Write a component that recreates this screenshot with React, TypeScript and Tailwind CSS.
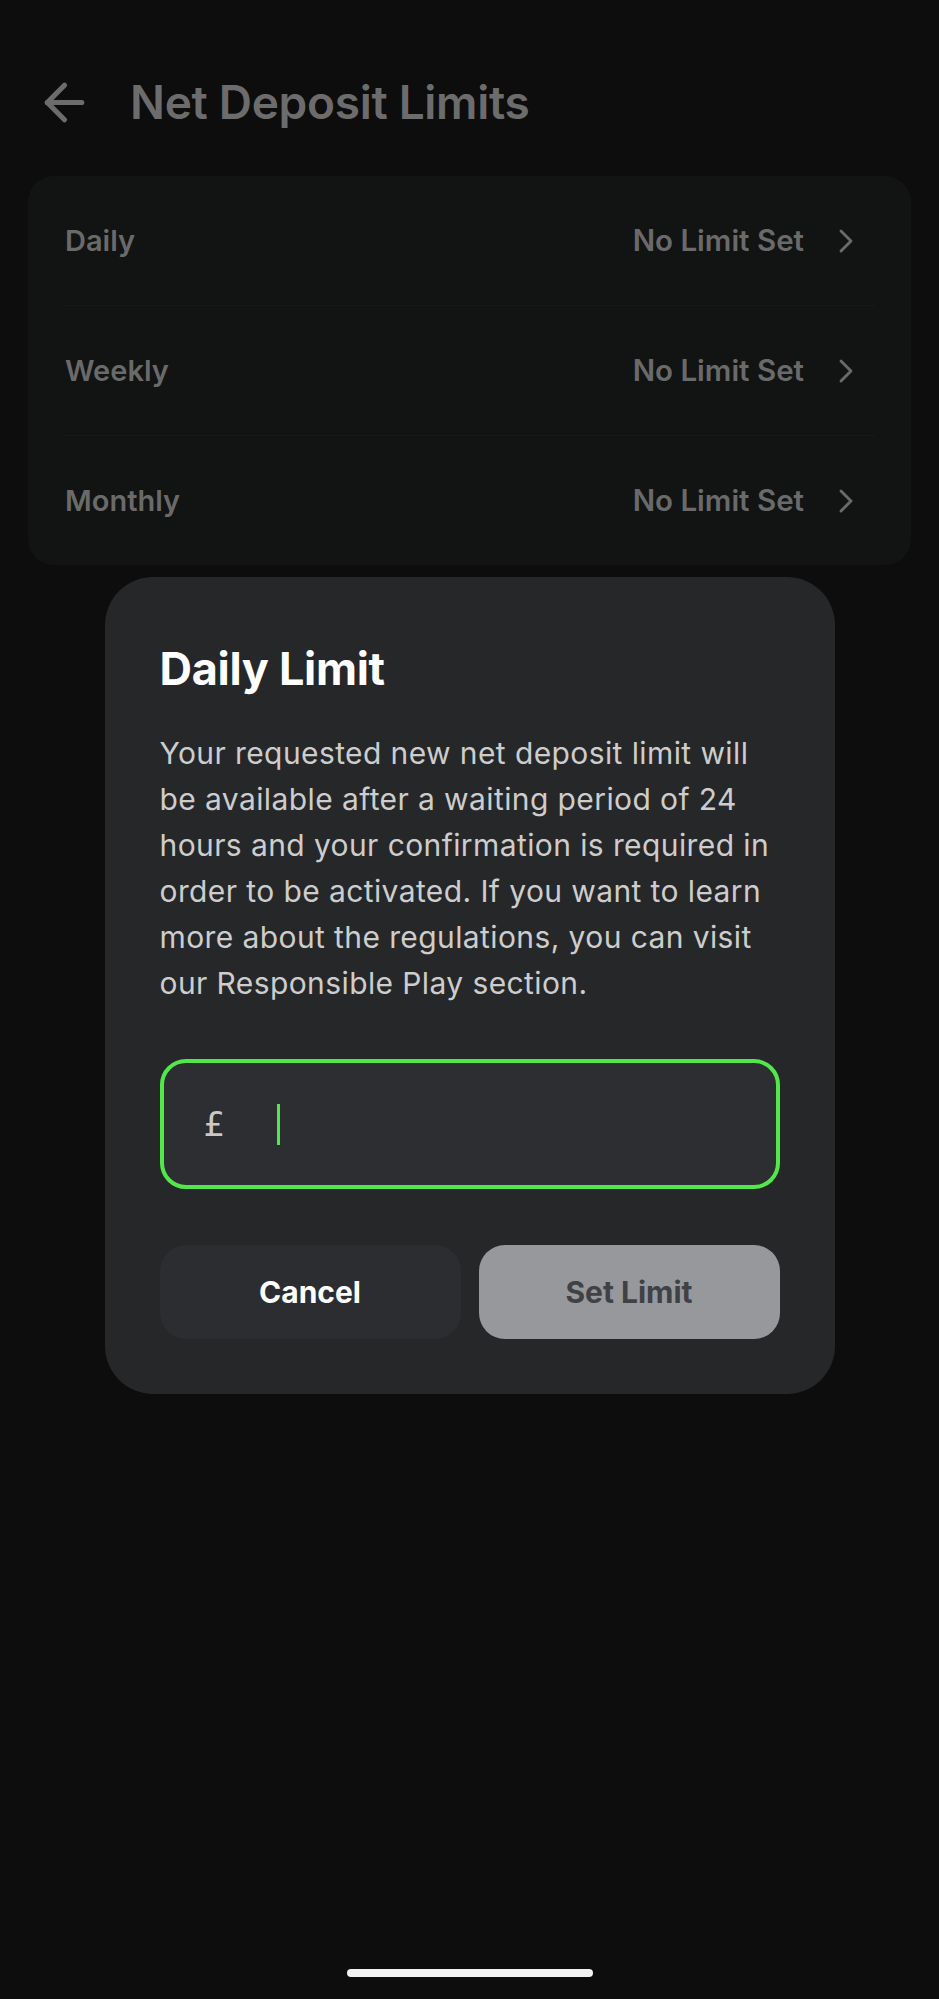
import { ArrowLeft, ChevronRight } from 'lucide-react';

const rows = ['Daily', 'Weekly', 'Monthly'];

export default function App() {
  return (
    <div
      className="relative w-[939px] h-[1999px] bg-[#0d0d0d] overflow-hidden"
      style={{ fontFamily: 'Inter, "Noto Sans", sans-serif' }}
    >
      {/* page under the dialog (dimmed) */}
      <div className="px-[28px] pt-[72px]">
        <div className="flex items-center h-[60px] pl-[7px] gap-[36px]">
          <ArrowLeft size={59} strokeWidth={2.1} className="text-[#6c6c6c] shrink-0" />
          <h1 className="text-[46px] font-semibold text-[#6c6c6c] tracking-[-0.3px]">Net Deposit Limits</h1>
        </div>

        <div className="mt-[44px] rounded-[26px] bg-[#121313]">
          {rows.map((r, i) => (
            <div key={r}>
              {i > 0 && <div className="mx-[36px] h-px bg-[#171818]" />}
              <div className="flex items-center justify-between h-[129px] pl-[37px] pr-[45px]">
                <span className="text-[29px] font-semibold text-[#6a6a6a]">{r}</span>
                <div className="flex items-center gap-[22px]">
                  <span className="text-[29.5px] font-semibold text-[#6a6a6a]">No Limit Set</span>
                  <ChevronRight size={40} strokeWidth={1.7} className="text-[#6a6a6a]" />
                </div>
              </div>
            </div>
          ))}
        </div>
      </div>

      {/* dialog */}
      <div className="absolute inset-x-0 top-[577px] flex justify-center">
        <div className="w-[730px] rounded-[48px] bg-[#262729] px-[55px] pt-[64px] pb-[55px]">
          <h2 className="text-[45px] font-bold text-white leading-[56px] tracking-[-0.3px]">Daily Limit</h2>
          <p className="mt-[33px] text-[30px] leading-[46px] text-[#cdcdcd] tracking-[0.4px] whitespace-nowrap">
            Your requested new net deposit limit will
            <br />
            be available after a waiting period of 24
            <br />
            hours and your confirmation is required in
            <br />
            order to be activated. If you want to learn
            <br />
            more about the regulations, you can visit
            <br />
            our Responsible Play section.
          </p>

          <div className="mt-[53px] flex items-center h-[130px] rounded-[26px] border-[4px] border-[#52e84a] bg-[#2d2e31] pl-[40px]">
            <span className="text-[34px] text-[#c9c9c9]" style={{ fontFamily: '"DejaVu Sans", sans-serif' }}>£</span>
            <span className="ml-[52px] w-[3px] h-[41px] bg-[#52e84a]" />
          </div>

          <div className="mt-[56px] grid grid-cols-2 gap-[18px]">
            <button className="h-[94px] rounded-[26px] bg-[#2c2d30] text-[30px] font-bold text-white">Cancel</button>
            <button className="h-[94px] rounded-[26px] bg-[#96989c] text-[30px] font-bold text-[#404145]">Set Limit</button>
          </div>
        </div>
      </div>

      {/* home indicator */}
      <div className="absolute bottom-[22px] inset-x-0 flex justify-center">
        <div className="w-[246px] h-[8px] rounded-full bg-[#f2f2f2]" />
      </div>
    </div>
  );
}
